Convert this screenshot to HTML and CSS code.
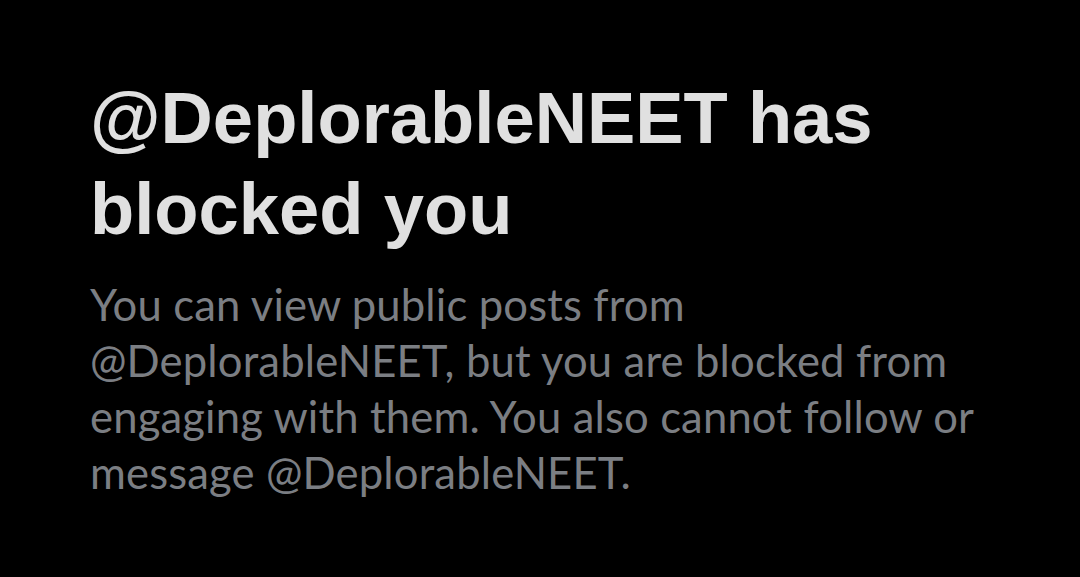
FILE: index.html
```html
<!DOCTYPE html>
<html lang="en">
<head>
<meta charset="utf-8">
<link rel="stylesheet" href="styles.css">
</head>
<body>
<main class="notice">
  <h1 class="title">@DeplorableNEET has blocked you</h1>
  <p class="desc">You can view public posts from @DeplorableNEET, but you are blocked from engaging with them. You also cannot follow or message @DeplorableNEET.</p>
</main>
</body>
</html>
```

FILE: styles.css
```css
html, body {
  margin: 0;
  padding: 0;
  background: #000;
  width: 1080px;
  height: 577px;
  overflow: hidden;
}
.notice {
  padding: 72px 60px 0 90px;
}
.title {
  margin: 0;
  font-family: "Liberation Sans", Arial, sans-serif;
  font-weight: 700;
  font-size: 72.4px;
  line-height: 91px;
  color: #e0e0e0;
  width: 900px;
}
.desc {
  margin: 22px 0 0;
  font-family: Lato, sans-serif;
  font-size: 43.6px;
  line-height: 56px;
  letter-spacing: 0.15px;
  color: #7b7e83;
  width: 905px;
}
```
